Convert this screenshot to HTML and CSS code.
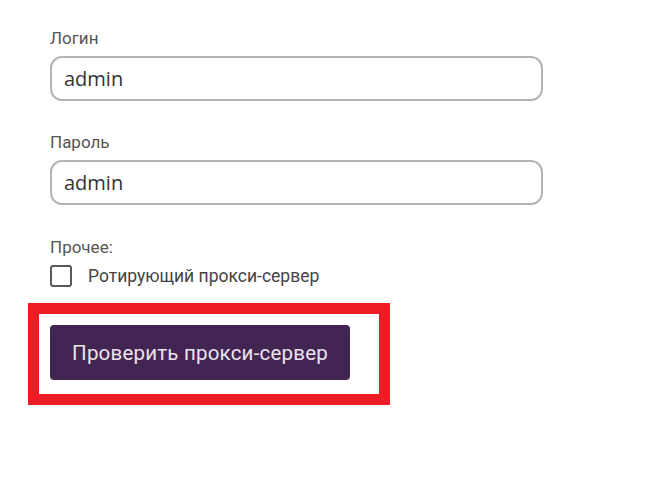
FILE: index.html
```html
<!DOCTYPE html>
<html lang="ru">
<head>
<meta charset="utf-8">
<title>Прокси</title>
<link rel="stylesheet" href="styles.css">
</head>
<body>
<div class="form">
  <div class="field">
    <label class="label" for="login">Логин</label>
    <input class="input" id="login" type="text" value="admin">
  </div>
  <div class="field">
    <label class="label" for="pass">Пароль</label>
    <input class="input" id="pass" type="text" value="admin">
  </div>
  <div class="field other">
    <div class="label">Прочее:</div>
    <label class="check-row">
      <span class="checkbox"></span>
      <span class="check-text">Ротирующий прокси-сервер</span>
    </label>
  </div>
  <div class="highlight">
    <button class="btn" type="button">Проверить прокси-сервер</button>
  </div>
</div>
</body>
</html>
```

FILE: styles.css
```css
html, body {
  margin: 0;
  padding: 0;
  background: #ffffff;
}
body {
  font-family: Roboto, "Liberation Sans", sans-serif;
}
.form {
  padding: 29px 0 0 50px;
  display: flex;
  flex-direction: column;
  align-items: flex-start;
}
.field {
  display: flex;
  flex-direction: column;
  margin-bottom: 32px;
}
.field.other {
  margin-top: 1px;
  margin-bottom: 16px;
}
.label {
  font-size: 17px;
  line-height: 18px;
  color: #555555;
  margin-bottom: 9px;
}
.input {
  box-sizing: border-box;
  width: 493px;
  height: 45px;
  border: 2px solid #b4b4b4;
  border-radius: 12px;
  padding: 0 12px;
  font-family: "Open Sans", "Noto Sans", sans-serif;
  font-size: 20px;
  color: #333333;
  outline: none;
  background: #fff;
  margin: 0;
}
.check-row {
  display: flex;
  align-items: center;
  gap: 16px;
  height: 22px;
}
.checkbox {
  box-sizing: border-box;
  width: 22px;
  height: 22px;
  border: 2px solid #5a5a5a;
  border-radius: 3px;
}
.check-text {
  font-size: 17.5px;
  color: #444444;
}
.highlight {
  margin-left: -22px;
  border: 11px solid #ee1c25;
  padding: 11px 29px 14px 11px;
}
.btn {
  display: block;
  width: 300px;
  height: 55px;
  border: none;
  border-radius: 4px;
  background: #432553;
  color: #ebe3ee;
  font-family: Roboto, "Liberation Sans", sans-serif;
  font-size: 20.5px;
  font-weight: 400;
  letter-spacing: 0.2px;
  padding: 0;
  cursor: pointer;
}
```
